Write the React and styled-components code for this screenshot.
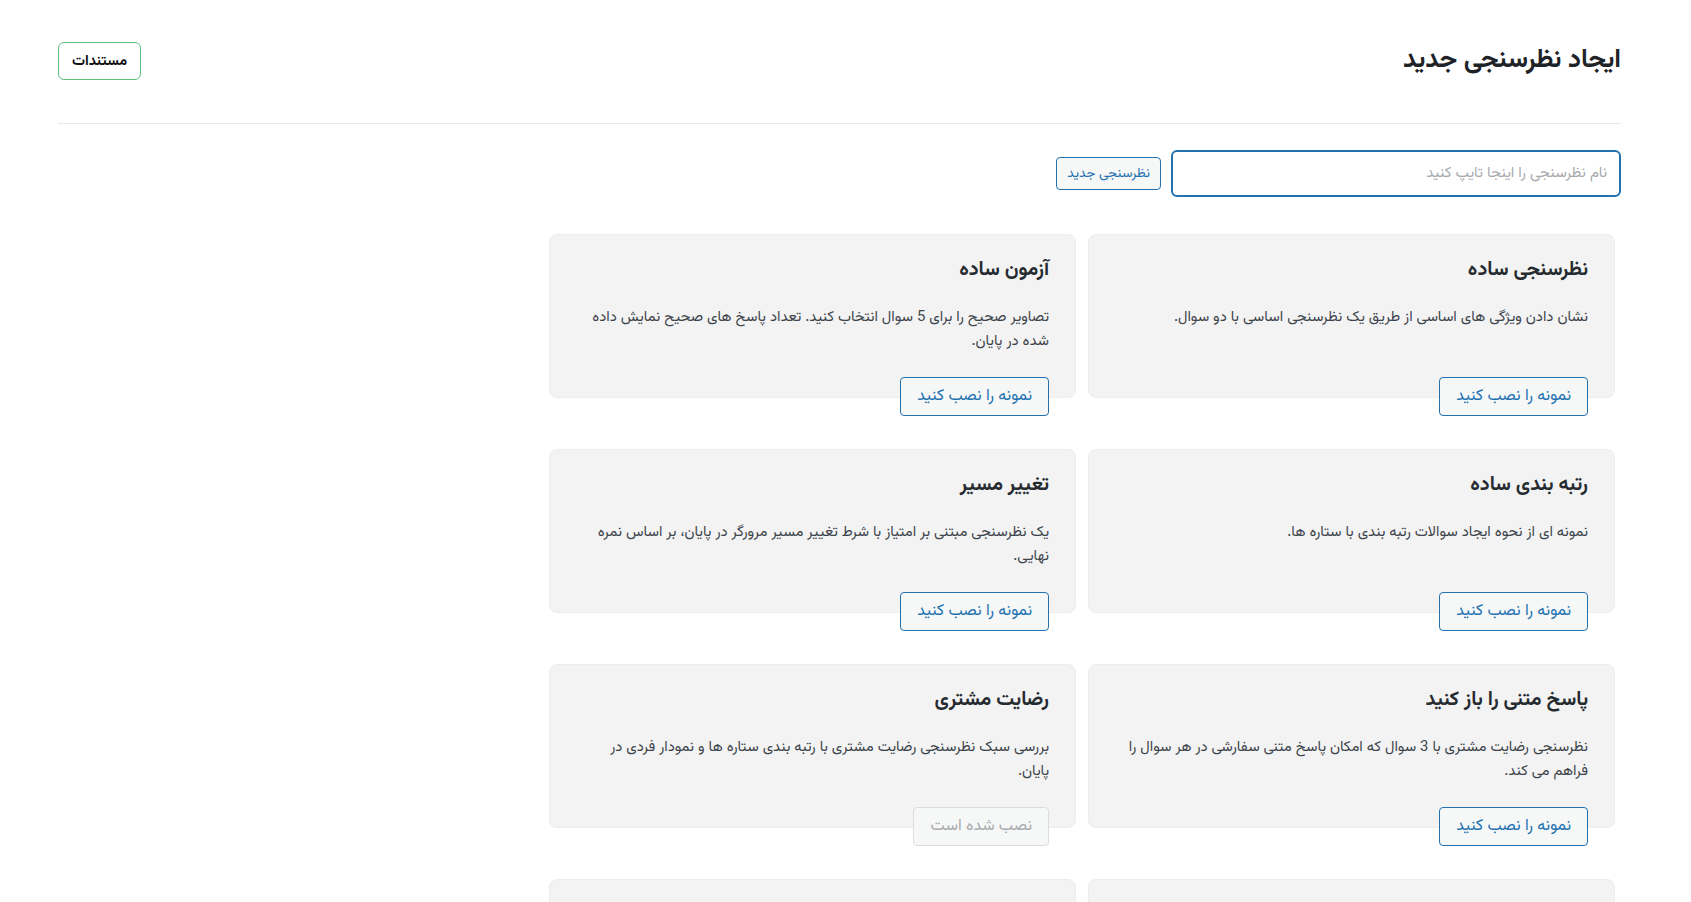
import React from 'react'
import styled, { createGlobalStyle } from 'styled-components'

const GlobalStyle = createGlobalStyle`
  body {
    margin: 0;
    background: #fff;
    font-family: "Vazirmatn", "Noto Sans Arabic", "DejaVu Sans", sans-serif;
    color: #1d2327;
  }
  * { box-sizing: border-box; }
`

const Page = styled.div`
  margin: 0 70px 0 58px;
`

const Header = styled.div`
  display: flex;
  align-items: center;
  justify-content: space-between;
  padding: 42px 0 43px;
  border-bottom: 1px solid #e8e8e8;
`

const Title = styled.h1`
  margin: 0;
  font-size: 26px;
  font-weight: 700;
  line-height: 38px;
  color: #1d2327;
`

const DocsButton = styled.a`
  display: inline-flex;
  align-items: center;
  justify-content: center;
  width: 83px;
  height: 38px;
  border: 1px solid #5cbf7e;
  border-radius: 6px;
  font-size: 14.5px;
  font-weight: 700;
  color: #111;
  text-decoration: none;
`

const NewRow = styled.div`
  display: flex;
  align-items: center;
  gap: 10px;
  margin-top: 26px;
`

const NameInput = styled.input`
  width: 450px;
  height: 47px;
  border: 2px solid #2271b1;
  border-radius: 6px;
  padding: 0 12px;
  font-family: inherit;
  font-size: 15px;
  color: #2c3338;
  outline: none;
  direction: rtl;

  &::placeholder {
    color: #a7aaad;
  }
`

const SmallButton = styled.button`
  height: 33px;
  padding: 0 10px;
  border: 1px solid #2271b1;
  border-radius: 4px;
  background: #f6f7f7;
  color: #2271b1;
  font-family: inherit;
  font-size: 13.7px;
  cursor: pointer;
`

const Grid = styled.div`
  display: grid;
  grid-template-columns: repeat(2, 527px);
  column-gap: 12px;
  row-gap: 51px;
  justify-content: start;
  margin: 37px 6px 0 0;
`

const Card = styled.div`
  display: flex;
  flex-direction: column;
  align-items: flex-start;
  height: 164px;
  padding: 23px 26px 0;
  background: #f3f3f4;
  border: 1px solid #ededee;
  border-radius: 8px;
`

const CardTitle = styled.h3`
  margin: 0 0 22px;
  font-size: 19.8px;
  font-weight: 700;
  line-height: 26px;
  color: #262b30;
`

const CardText = styled.p`
  margin: 0;
  font-size: 14.8px;
  line-height: 24px;
  color: #3c434a;
`

const InstallButton = styled.button`
  margin-top: auto;
  margin-bottom: -19px;
  height: 39px;
  padding: 0 16px;
  border: 1px solid ${p => (p.disabled ? '#dcdcde' : '#2271b1')};
  border-radius: 4px;
  background: #f6f7f7;
  color: ${p => (p.disabled ? '#a7aaad' : '#2271b1')};
  font-family: inherit;
  font-size: 16px;
  cursor: ${p => (p.disabled ? 'default' : 'pointer')};
`

const templates = [
  {
    title: 'نظرسنجی ساده',
    text: 'نشان دادن ویژگی های اساسی از طریق یک نظرسنجی اساسی با دو سوال.'
  },
  {
    title: 'آزمون ساده',
    text: 'تصاویر صحیح را برای 5 سوال انتخاب کنید. تعداد پاسخ های صحیح نمایش داده شده در پایان.'
  },
  {
    title: 'رتبه بندی ساده',
    text: 'نمونه ای از نحوه ایجاد سوالات رتبه بندی با ستاره ها.'
  },
  {
    title: 'تغییر مسیر',
    text: 'یک نظرسنجی مبتنی بر امتیاز با شرط تغییر مسیر مرورگر در پایان، بر اساس نمره نهایی.'
  },
  {
    title: 'پاسخ متنی را باز کنید',
    text: 'نظرسنجی رضایت مشتری با 3 سوال که امکان پاسخ متنی سفارشی در هر سوال را فراهم می کند.'
  },
  {
    title: 'رضایت مشتری',
    text: 'بررسی سبک نظرسنجی رضایت مشتری با رتبه بندی ستاره ها و نمودار فردی در پایان.',
    installed: true
  },
  {
    title: 'نظرسنجی چند مرحله ای',
    text: 'نظرسنجی با چند صفحه و نوار پیشرفت.'
  },
  {
    title: 'فرم بازخورد',
    text: 'جمع آوری بازخورد کاربران با سوالات ساده.'
  }
]

export default function App () {
  return (
    <Page dir='rtl'>
      <GlobalStyle />
      <Header>
        <Title>ایجاد نظرسنجی جدید</Title>
        <DocsButton href='#'>مستندات</DocsButton>
      </Header>
      <NewRow>
        <NameInput placeholder='نام نظرسنجی را اینجا تایپ کنید' />
        <SmallButton>نظرسنجی جدید</SmallButton>
      </NewRow>
      <Grid>
        {templates.map((t) => (
          <Card key={t.title}>
            <CardTitle>{t.title}</CardTitle>
            <CardText>{t.text}</CardText>
            <InstallButton disabled={t.installed}>
              {t.installed ? 'نصب شده است' : 'نمونه را نصب کنید'}
            </InstallButton>
          </Card>
        ))}
      </Grid>
    </Page>
  )
}
